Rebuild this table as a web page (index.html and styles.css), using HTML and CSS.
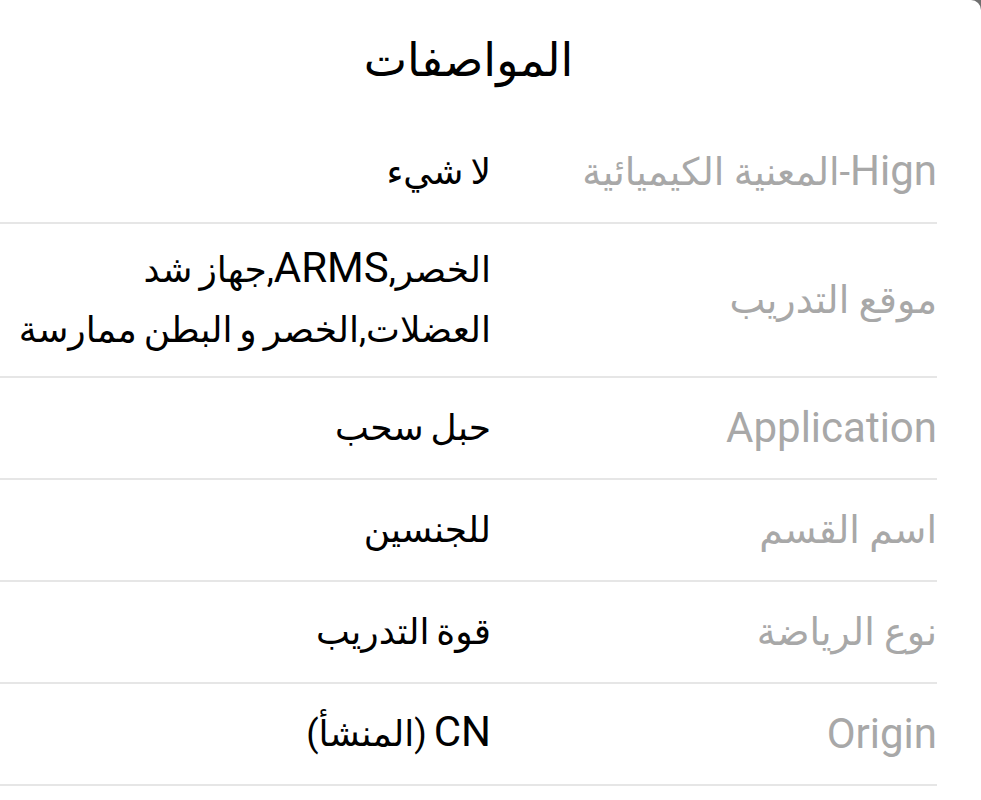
FILE: index.html
```html
<!DOCTYPE html>
<html lang="ar" dir="rtl">
<head>
<meta charset="utf-8">
<link rel="stylesheet" href="styles.css">
</head>
<body>
<div class="sheet">
  <div class="content">
    <h1 class="title">المواصفات</h1>
    <div class="specs">
      <div class="row">
        <div class="label"><span class="latin">Hign</span>-المعنية الكيميائية</div>
        <div class="value">لا شيء</div>
      </div>
      <div class="row">
        <div class="label">موقع التدريب</div>
        <div class="value">الخصر,<span class="latin">ARMS</span>,جهاز شد العضلات,الخصر و البطن ممارسة</div>
      </div>
      <div class="row">
        <div class="label latin">Application</div>
        <div class="value">حبل سحب</div>
      </div>
      <div class="row">
        <div class="label">اسم القسم</div>
        <div class="value">للجنسين</div>
      </div>
      <div class="row">
        <div class="label">نوع الرياضة</div>
        <div class="value">قوة التدريب</div>
      </div>
      <div class="row">
        <div class="label latin">Origin</div>
        <div class="value"><span class="latin">CN</span> (المنشأ)</div>
      </div>
    </div>
  </div>
</div>
</body>
</html>
```
FILE: styles.css
```css
html, body {
  margin: 0;
  padding: 0;
}
body {
  background: #6f6f6f;
  font-family: Roboto, "DejaVu Sans", sans-serif;
  overflow: hidden;
}
.sheet {
  background: #ffffff;
  min-height: 800px;
  border-top-right-radius: 10px;
}
.content {
  padding-right: 44px;
}
.title {
  margin: 0;
  height: 120px;
  padding-bottom: 2px;
  display: flex;
  align-items: center;
  justify-content: center;
  font-size: 46px;
  font-weight: normal;
  color: #000;
}
.specs {
  display: flex;
  flex-direction: column;
}
.row {
  display: flex;
  align-items: center;
  gap: 26px;
  min-height: 102px;
  box-sizing: border-box;
  padding: 16px 0;
  border-bottom: 2px solid #e6e6e6;
}
.label {
  flex: 0 0 420px;
  font-size: 38px;
  color: #a8a8a8;
  line-height: 60px;
}
.value {
  flex: 1 1 auto;
  font-size: 36px;
  word-spacing: -2px;
  color: #000;
  line-height: 60px;
}
.latin {
  font-size: 42px;
  line-height: 1;
  word-spacing: normal;
}
.label.latin {
  line-height: 60px;
}
```
